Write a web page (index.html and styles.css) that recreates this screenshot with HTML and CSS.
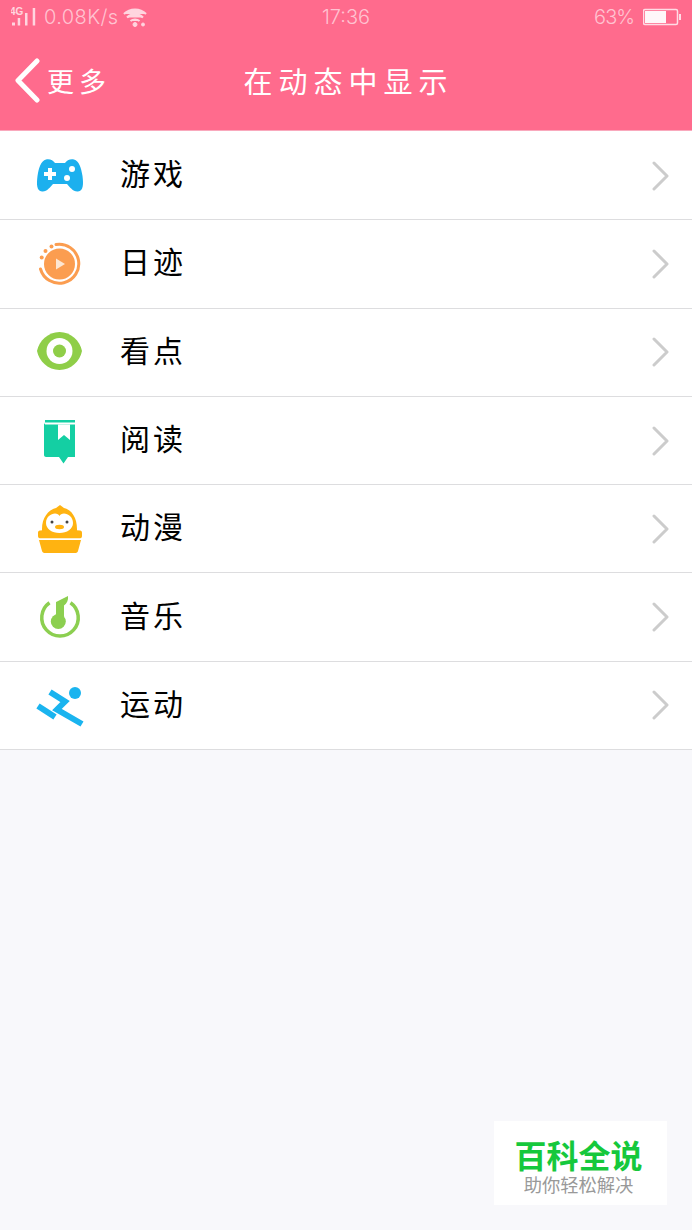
FILE: index.html
```html
<!DOCTYPE html>
<html lang="zh-CN">
<head>
<meta charset="utf-8">
<title>在动态中显示</title>
<link rel="stylesheet" href="styles.css">
</head>
<body>
<div class="page">
  <header class="header">
    <div class="status">
      <div class="status-left">
        <svg class="signal" width="26" height="20" viewBox="0 0 26 20">
          <text x="-1" y="7.500" class="net">4G</text>
          <rect x="1" y="15.500" width="3" height="3"/>
          <rect x="6.700" y="11" width="2.500" height="7.500"/>
          <rect x="14" y="6" width="2.500" height="12.500"/>
          <rect x="21.700" y="1" width="2.500" height="17.500"/>
        </svg>
        <span class="speed">0.08K/s</span>
        <svg class="wifi" width="24" height="20" viewBox="0 0 24 20" fill="none">
          <path d="M1 7C7 1 17 1 23 7M4 10.500C9 6 15 6 20 10.500M7.500 14C10 12 14 12 16.500 14" stroke-width="2.200"/>
          <circle cx="12" cy="17.500" r="2"/>
          <circle cx="20" cy="17.500" r="1.500"/>
        </svg>
      </div>
      <span class="time">17:36</span>
      <div class="status-right">
        <span class="percent">63%</span>
        <svg class="battery" width="38" height="18" viewBox="0 0 38 18">
          <rect class="batt-shell" x="0.500" y="1.500" width="34" height="15" rx="1.500"/>
          <rect class="batt-fill" x="2" y="3" width="21" height="12"/>
          <rect class="batt-cap" x="36" y="6" width="2" height="6"/>
        </svg>
      </div>
    </div>
    <div class="nav">
      <div class="back">
        <svg class="back-icon" width="26" height="48" viewBox="0 0 26 48" fill="none">
          <path d="M22 5L3 24.500L22 44"/>
        </svg>
        <span class="back-label">更多</span>
      </div>
      <h1 class="title">在动态中显示</h1>
      <div class="nav-spacer"></div>
    </div>
  </header>

  <ul class="list">
    <li class="row">
      <svg class="icon" viewBox="0 0 48 48">
        <path fill="#1cb0ee" d="M10 7.500C14 6.500 17 8.500 19 11H29C31 8.500 34 6.500 38 7.500C43 9 45 15 46.500 24C47.500 32 47.500 39 42 39.500C37 40 34 35 31 32H17C14 35 11 40 6 39.500C.5 39 .5 32 1.500 24C3 15 5 9 10 7.500Z"/>
        <path fill="#fff" d="M12 16H16V20H20V24H16V28H12V24H8V20H12Z"/>
        <circle fill="#fff" cx="36" cy="17" r="3"/>
        <circle fill="#fff" cx="31" cy="26" r="3"/>
      </svg>
      <span class="label">游戏</span>
      <svg class="chevron" width="18" height="30" viewBox="0 0 18 30" fill="none"><path d="M2 2L15 15L2 28"/></svg>
    </li>
    <li class="row">
      <svg class="icon" viewBox="0 0 48 48">
        <path fill="none" stroke="#fb9d50" stroke-width="3" stroke-linecap="round" d="M20 4.500A19.500 19.500 0 1 1 4.500 29"/>
        <circle fill="#fb9d50" cx="23.500" cy="24" r="15.500"/>
        <path fill="#fde6d2" d="M20 18.500L29 24L20 29.500Z"/>
        <circle fill="#fb9d50" cx="5.700" cy="17.500" r="2"/>
        <circle fill="#fb9d50" cx="9.500" cy="11" r="2"/>
        <circle fill="#fb9d50" cx="15.500" cy="6.500" r="2"/>
      </svg>
      <span class="label">日迹</span>
      <svg class="chevron" width="18" height="30" viewBox="0 0 18 30" fill="none"><path d="M2 2L15 15L2 28"/></svg>
    </li>
    <li class="row">
      <svg class="icon" viewBox="0 0 48 48">
        <path fill="#8fce48" d="M1 23C3 13 12 4 23.500 4C35 4 44 13 46 23C44 33 35 42 23.500 42C12 42 3 33 1 23Z"/>
        <circle fill="#fff" cx="23.500" cy="23" r="13"/>
        <circle fill="#8fce48" cx="23.500" cy="23" r="6.500"/>
      </svg>
      <span class="label">看点</span>
      <svg class="chevron" width="18" height="30" viewBox="0 0 18 30" fill="none"><path d="M2 2L15 15L2 28"/></svg>
    </li>
    <li class="row">
      <svg class="icon" viewBox="0 0 48 48">
        <path fill="#14cfa3" d="M9 3H39V5.500H9Z"/>
        <path fill="#14cfa3" d="M8 5C8 7 9 7.500 10 7.500H39V40H32L27.500 46.500L23 40H10C9 40 8 39 8 38Z"/>
        <path fill="#fff" d="M22 7.500H34V23L28 18L22 23Z"/>
      </svg>
      <span class="label">阅读</span>
      <svg class="chevron" width="18" height="30" viewBox="0 0 18 30" fill="none"><path d="M2 2L15 15L2 28"/></svg>
    </li>
    <li class="row">
      <svg class="icon" viewBox="0 0 48 48">
        <path fill="#ffb311" d="M24 0L28 3C36 5 41 13 41 24V30H6V24C6 13 12 5 20 3Z"/>
        <path fill="#fff" d="M10 18C10 12 15 8.500 19 8.500C21 8.500 23 9.500 23.500 11C24 9.500 26 8.500 28 8.500C32 8.500 37 12 37 18C37 24 31 28 23.500 28C16 28 10 24 10 18Z"/>
        <circle fill="#444" cx="16" cy="17" r="1.500"/>
        <circle fill="#444" cx="31" cy="17" r="1.500"/>
        <ellipse fill="#ffb311" cx="23.500" cy="22" rx="4.500" ry="2.200"/>
        <path fill="#ffb311" d="M4 25.500L10 25L16 29H31L37 25L44 25.500C45.500 25.500 46 26.500 46 28V31C46 32.500 45 33.500 44 33.500H4C3 33.500 2 32.500 2 31V28C2 26.500 2.500 25.500 4 25.500Z"/>
        <path fill="#fff" d="M3 33.500H45V35H3Z"/>
        <path fill="#ffb311" d="M3 35H45L42 46C41.500 47.500 40.500 48 39 48H9C7.500 48 6.500 47.500 6 46Z"/>
      </svg>
      <span class="label">动漫</span>
      <svg class="chevron" width="18" height="30" viewBox="0 0 18 30" fill="none"><path d="M2 2L15 15L2 28"/></svg>
    </li>
    <li class="row">
      <svg class="icon" viewBox="0 0 48 48">
        <path fill="none" stroke="#8ccf50" stroke-width="3.500" d="M13.500 9.800A18.250 18.250 0 1 0 34.500 9.800"/>
        <circle fill="#8ccf50" cx="22.300" cy="28.500" r="7.500"/>
        <path fill="#8ccf50" d="M20 28V9L32 3C32.500 7 31 10.500 28 12.500V29Z"/>
      </svg>
      <span class="label">音乐</span>
      <svg class="chevron" width="18" height="30" viewBox="0 0 18 30" fill="none"><path d="M2 2L15 15L2 28"/></svg>
    </li>
    <li class="row">
      <svg class="icon" viewBox="0 0 48 48">
        <circle fill="#1ab4ef" cx="39" cy="12" r="6"/>
        <path fill="none" stroke="#1ab4ef" stroke-width="6" d="M14 11L29 20.500L21 28.500L46 43"/>
        <path fill="none" stroke="#1ab4ef" stroke-width="6" d="M2 25L19 36"/>
      </svg>
      <span class="label">运动</span>
      <svg class="chevron" width="18" height="30" viewBox="0 0 18 30" fill="none"><path d="M2 2L15 15L2 28"/></svg>
    </li>
  </ul>

  <aside class="badge">
    <div class="badge-title">百科全说</div>
    <div class="badge-sub">助你轻松解决</div>
  </aside>
</div>
</body>
</html>
```

FILE: styles.css
```css
* { box-sizing: border-box; }
html, body { margin: 0; padding: 0; }
body {
  font-family: "Noto Sans CJK SC", "Noto Sans", sans-serif;
  background: #f8f8fb;
}
.page {
  position: relative;
  width: 692px;
  height: 1230px;
  overflow: hidden;
  background: #f8f8fb;
}
.header {
  height: 131px;
  background: #ff6b8d;
  border-bottom: 1px solid #f9a9bd;
  display: flex;
  flex-direction: column;
}
.status {
  height: 34px;
  padding: 0 11px;
  display: grid;
  grid-template-columns: 1fr auto 1fr;
  align-items: center;
  color: #ffc3d1;
  font-family: "Inter", "Liberation Sans", sans-serif;
  font-weight: 300;
  font-size: 20px;
}
.status-left { display: flex; align-items: center; }
.status-right { display: flex; align-items: center; justify-content: flex-end; }
.signal { fill: #ffd5df; flex: none; }
.net { font-size: 10px; font-weight: 700; font-family: "Liberation Sans", sans-serif; }
.speed { margin-left: 7px; letter-spacing: .4px; }
.wifi { margin-left: 4px; fill: #ffd5df; stroke: #ffd5df; flex: none; }
.time { font-size: 20px; }
.percent { margin-right: 9px; letter-spacing: -1px; }
.batt-shell { fill: none; stroke: #ffdce5; stroke-width: 1.500; }
.batt-fill { fill: #fff; opacity: .95; }
.batt-cap { fill: #ffdce5; }
.nav {
  flex: 1;
  padding: 0 10px 4px 15px;
  display: grid;
  grid-template-columns: 1fr auto 1fr;
  align-items: center;
  color: #fff;
}
.back { display: flex; align-items: center; gap: 6px; }
.back-icon { stroke: #fff; stroke-width: 5; stroke-linecap: round; stroke-linejoin: round; flex: none; }
.back-label { font-size: 27px; letter-spacing: 5px; line-height: 1; }
.title {
  margin: 0;
  font-size: 29px;
  font-weight: 400;
  letter-spacing: 6px;
  line-height: 1;
}
.list {
  list-style: none;
  margin: 0;
  padding: 1px 0 0;
  background: #fff;
}
.row {
  height: 88.300px;
  display: flex;
  align-items: center;
  padding-left: 36px;
  padding-right: 22px;
  border-bottom: 1px solid #dddddf;
}
.icon { width: 48px; height: 48px; flex: none; }
.label {
  margin-left: 36px;
  margin-bottom: 7px;
  font-size: 30px;
  letter-spacing: 3px;
  line-height: 1;
  color: #000;
}
.chevron {
  margin-left: auto;
  stroke: #cccccc;
  stroke-width: 3;
  stroke-linecap: round;
  stroke-linejoin: round;
}
.badge {
  position: absolute;
  left: 494px;
  top: 1121px;
  width: 173px;
  height: 84px;
  background: #fff;
  display: flex;
  flex-direction: column;
  align-items: center;
  padding: 14px 4px 0 0;
}
.badge-title {
  font-size: 32px;
  line-height: 38px;
  font-weight: 700;
  color: #16c83c;
}
.badge-sub {
  font-size: 18.300px;
  line-height: 22px;
  color: #999;
}
```
